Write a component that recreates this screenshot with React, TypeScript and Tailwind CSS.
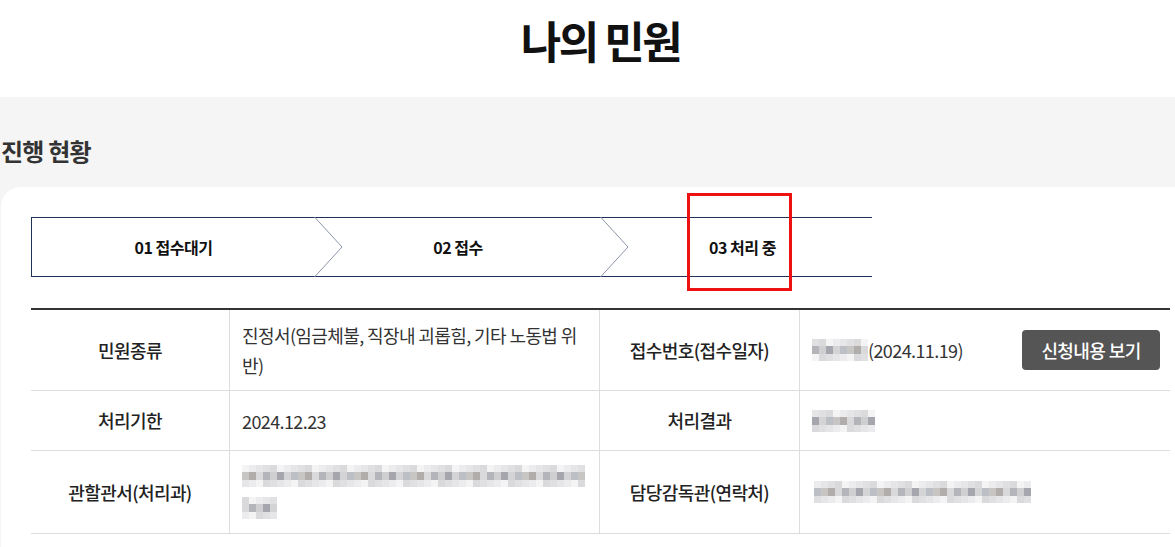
import React from 'react';

const FONT = "font-['Noto_Sans_CJK_KR','Noto_Sans',sans-serif]";

const tones = [
  'bg-[#d4d4d6]',
  'bg-[#b4b5ba]',
  'bg-[#c8c6c4]',
  'bg-[#a6a7ae]',
  'bg-[#d9d9db]',
  'bg-[#bdbfc6]',
  'bg-[#cfcfd1]',
  'bg-[#b0adab]',
];
const lightTones = ['bg-[#ececee]', 'bg-[#e0e0e2]', 'bg-[#f4f4f4]', 'bg-[#e6e6e8]', 'bg-[#dadadc]'];

// pixelated (mosaic) blocks standing in for masked personal data
const Mosaic: React.FC<{ cols: number; seed?: number }> = ({ cols, seed = 0 }) => (
  <div className="flex flex-col">
    <div className="flex">
      {Array.from({ length: cols }).map((_, i) => (
        <div key={i} className={`w-[7px] h-[7px] ${lightTones[(i * 3 + seed) % lightTones.length]}`} />
      ))}
    </div>
    <div className="flex">
      {Array.from({ length: cols }).map((_, i) => (
        <div key={i} className={`w-[7px] h-[8px] ${tones[(i * 5 + seed) % tones.length]}`} />
      ))}
    </div>
    <div className="flex">
      {Array.from({ length: cols }).map((_, i) => (
        <div key={i} className={`w-[7px] h-[7px] ${lightTones[(i * 2 + seed + 1) % lightTones.length]}`} />
      ))}
    </div>
  </div>
);

const Chevron: React.FC = () => (
  <svg className="absolute -right-[28px] -top-px z-10" width="29" height="60" viewBox="0 0 29 60">
    <polyline points="0.5,0 28,30 0.5,60" fill="none" stroke="#8a94a8" strokeWidth="1" />
  </svg>
);

const steps = [
  { label: '01 접수대기', w: 'w-[284px]', first: true, chevron: true },
  { label: '02 접수', w: 'w-[286px]', first: false, chevron: true },
  { label: '03 처리 중', w: 'w-[271px]', first: false, chevron: false },
];

const Label: React.FC<{ children: React.ReactNode }> = ({ children }) => (
  <div className="flex items-center justify-center border-b border-r border-[#dddddd] text-[18px] font-medium text-[#222] tracking-[-0.6px]">
    {children}
  </div>
);

const Value: React.FC<{ children: React.ReactNode; border?: boolean; className?: string }> = ({
  children,
  border = true,
  className = '',
}) => (
  <div
    className={`flex items-center border-b ${border ? 'border-r' : ''} border-[#dddddd] pl-[12px] text-[18px] text-[#333] tracking-[-0.6px] leading-[30px] ${className}`}
  >
    {children}
  </div>
);

export default function App() {
  return (
    <div className={`${FONT} w-[1175px] min-h-[547px] bg-white overflow-hidden`}>
      <div className="h-[97px] flex justify-center pt-[11px]">
        <h1 className="text-[44px] font-bold text-[#111] tracking-[-2.5px] leading-[58px] pl-[26px]">나의 민원</h1>
      </div>

      <div className="bg-[#f5f5f5] pt-[38px]">
        <h2 className="pl-[1px] text-[24px] font-bold text-[#333] leading-[32px] tracking-[-0.8px]">진행 현황</h2>

        <div className="mt-[20px] ml-px bg-white rounded-tl-[20px] pt-[30px] pl-[30px] pr-[5px] pb-[14px]">
          {/* progress steps */}
          <div className="relative flex w-[841px] h-[60px]">
            {steps.map((s) => (
              <div
                key={s.label}
                className={`relative ${s.w} flex items-center justify-center border-y border-[#1f3358] ${
                  s.first ? 'border-l' : ''
                } text-[16px] font-bold text-[#111] tracking-[-0.5px]`}
              >
                <span className={s.chevron ? '' : 'pl-[12px]'}>{s.label}</span>
                {s.chevron && <Chevron />}
              </div>
            ))}
            <div className="absolute left-[656px] -top-[24px] w-[105px] h-[98px] border-[3px] border-[#ee1111] pointer-events-none" />
          </div>

          {/* detail table */}
          <div className="mt-[31px] border-t-2 border-[#333] grid grid-cols-[199px_370px_200px_370px]">
            <Label>민원종류</Label>
            <Value className="py-[10px] pr-[12px]">진정서(임금체불, 직장내 괴롭힘, 기타 노동법 위반)</Value>
            <Label>접수번호(접수일자)</Label>
            <Value border={false} className="justify-between pr-[10px]">
              <div className="flex items-center">
                <Mosaic cols={8} seed={1} />
                <span>(2024.11.19)</span>
              </div>
              <button className="h-[40px] w-[138px] rounded-[4px] bg-[#555555] text-white text-[18px] font-medium tracking-[-0.6px]">
                신청내용 보기
              </button>
            </Value>

            <Label>처리기한</Label>
            <Value className="h-[60px]">2024.12.23</Value>
            <Label>처리결과</Label>
            <Value border={false} className="h-[60px] pl-[11px]">
              <Mosaic cols={9} seed={3} />
            </Value>

            <Label>관할관서(처리과)</Label>
            <Value className="h-[83px]">
              <div className="flex flex-col gap-[10px]">
                <Mosaic cols={49} seed={2} />
                <Mosaic cols={5} seed={4} />
              </div>
            </Value>
            <Label>담당감독관(연락처)</Label>
            <Value border={false} className="h-[83px] pl-[14px]">
              <Mosaic cols={31} seed={5} />
            </Value>
          </div>
        </div>
      </div>
    </div>
  );
}
